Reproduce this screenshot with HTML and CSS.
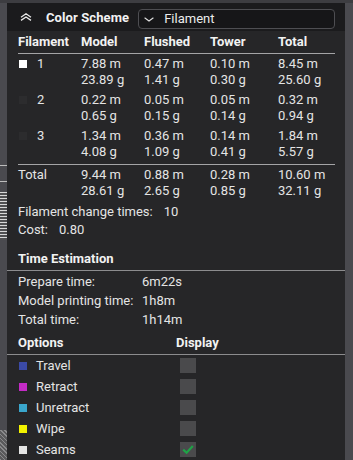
FILE: index.html
```html
<!DOCTYPE html>
<html lang="en">
<head>
  <meta charset="UTF-8" />
  <meta name="viewport" content="width=device-width, initial-scale=1" />
  <title>Color Scheme</title>
  <link rel="stylesheet" href="styles.css">
</head>
<body>

<div class="panel">
  <!-- Header -->
  <div class="panel-head">
    <svg class="collapse-icon" width="12" height="8" viewBox="0 0 12 8">
      <path d="M1 4.2 L6 0.8 L11 4.2 M1 7.4 L6 4 L11 7.4" fill="none" stroke="#e8e8e8" stroke-width="1.3"/>
    </svg>
    <span class="title">Color Scheme</span>
    <div class="select">
      <svg width="10" height="5" viewBox="0 0 10 5">
        <path d="M0.6 0.8 L5 4 L9.4 0.8" fill="none" stroke="#e0e0e0" stroke-width="1.1"/>
      </svg>
      <span>Filament</span>
    </div>
  </div>

  <div class="panel-body">
    <!-- Filament usage -->
    <div class="fil-row fil-head">
      <span>Filament</span>
      <span>Model</span>
      <span>Flushed</span>
      <span>Tower</span>
      <span>Total</span>
    </div>

    <div class="fil-rows">
      <div class="fil-row">
        <span class="fil-id"><i class="swatch" style="background:#ffffff"></i>1</span>
        <span><b>7.88 m</b><b>23.89 g</b></span>
        <span><b>0.47 m</b><b>1.41 g</b></span>
        <span><b>0.10 m</b><b>0.30 g</b></span>
        <span><b>8.45 m</b><b>25.60 g</b></span>
      </div>
      <div class="fil-row">
        <span class="fil-id"><i class="swatch" style="background:#2c2c2e"></i>2</span>
        <span><b>0.22 m</b><b>0.65 g</b></span>
        <span><b>0.05 m</b><b>0.15 g</b></span>
        <span><b>0.05 m</b><b>0.14 g</b></span>
        <span><b>0.32 m</b><b>0.94 g</b></span>
      </div>
      <div class="fil-row">
        <span class="fil-id"><i class="swatch" style="background:#2c2c2e"></i>3</span>
        <span><b>1.34 m</b><b>4.08 g</b></span>
        <span><b>0.36 m</b><b>1.09 g</b></span>
        <span><b>0.14 m</b><b>0.41 g</b></span>
        <span><b>1.84 m</b><b>5.57 g</b></span>
      </div>
    </div>

    <div class="fil-row fil-total">
      <span>Total</span>
      <span><b>9.44 m</b><b>28.61 g</b></span>
      <span><b>0.88 m</b><b>2.65 g</b></span>
      <span><b>0.28 m</b><b>0.85 g</b></span>
      <span><b>10.60 m</b><b>32.11 g</b></span>
    </div>

    <div class="summary">
      <div>Filament change times:<span class="val">10</span></div>
      <div>Cost:<span class="val">0.80</span></div>
    </div>

    <!-- Time estimation -->
    <div class="section-title">Time Estimation</div>
    <div class="time-list">
      <div class="time-row"><span>Prepare time:</span><span>6m22s</span></div>
      <div class="time-row"><span>Model printing time:</span><span>1h8m</span></div>
      <div class="time-row"><span>Total time:</span><span>1h14m</span></div>
    </div>

    <!-- Options -->
    <div class="section-title opt-head">
      <span>Options</span>
      <span>Display</span>
    </div>
    <div class="opt-list">
      <div class="opt-row">
        <span class="opt-name"><i class="swatch" style="background:#3b4aa6"></i>Travel</span>
        <span class="check"></span>
      </div>
      <div class="opt-row">
        <span class="opt-name"><i class="swatch" style="background:#c42bc6"></i>Retract</span>
        <span class="check"></span>
      </div>
      <div class="opt-row">
        <span class="opt-name"><i class="swatch" style="background:#3aa6cc"></i>Unretract</span>
        <span class="check"></span>
      </div>
      <div class="opt-row">
        <span class="opt-name"><i class="swatch" style="background:#f2f200"></i>Wipe</span>
        <span class="check"></span>
      </div>
      <div class="opt-row">
        <span class="opt-name"><i class="swatch" style="background:#e4e4e4"></i>Seams</span>
        <span class="check">
          <svg width="16" height="15" viewBox="0 0 16 15">
            <path d="M3.2 7.6 L6.6 10.8 L12.8 4" fill="none" stroke="#1fa347" stroke-width="2.2"/>
          </svg>
        </span>
      </div>
    </div>
  </div>
</div>

</body>
</html>
```

FILE: styles.css
```css
/* Page & 3D viewport behind the panel */
body {
  margin: 0;
  height: 460px;
  overflow: hidden;
  font-family: Roboto, "Noto Sans", sans-serif;
  font-size: 13px;
  color: #e4e4e4;
  background:
    repeating-linear-gradient(180deg, #d8d8d8 0 1px, #505052 1px 3px) 0 192px / 7px 48px no-repeat,
    linear-gradient(#bdbdbd, #bdbdbd) 0 165px / 7px 1px no-repeat,
    linear-gradient(#bdbdbd, #bdbdbd) 0 181px / 7px 1px no-repeat,
    repeating-linear-gradient(45deg, #8a8a8c 0 1px, #5a5a5c 1px 3px) 0 430px / 7px 30px no-repeat,
    linear-gradient(180deg, #3d3d41 0, #3d3d41 3px, #4a4a4f 3px);
}

/* Panel */
.panel {
  margin: 3px 8px 0 7px;
  height: 457px;
  background: #262628;
  overflow: hidden;
}

.panel-head {
  height: 28px;
  display: flex;
  align-items: center;
  background: #1b1b1d;
}

.collapse-icon {
  margin-left: 13px;
  margin-top: -1px;
}

.title {
  margin-left: 14px;
  font-weight: 700;
  color: #f2f2f2;
  letter-spacing: 0.1px;
}

.select {
  margin-left: 9px;
  margin-top: 3px;
  width: 195px;
  height: 18px;
  border: 1px solid #4e4e52;
  border-radius: 4px;
  background: #161618;
  display: flex;
  align-items: center;
}

.select svg {
  margin-left: 5px;
  margin-top: 1px;
}

.select span {
  margin-left: 10px;
  color: #ececec;
}

.panel-body {
  padding: 0 10px 0 11px;
}

/* Filament table */
.fil-row {
  display: grid;
  grid-template-columns: 63px 63px 66px 68px 1fr;
}

.fil-row b {
  display: block;
  font-weight: 400;
  line-height: 16px;
}

.fil-head {
  margin-top: 2px;
  line-height: 18px;
  padding-bottom: 2px;
  border-bottom: 1px solid #a4a4a6;
  font-weight: 700;
  color: #f2f2f2;
}

.fil-rows {
  margin-top: 2px;
  display: flex;
  flex-direction: column;
  gap: 4px;
}

.fil-id {
  display: flex;
  align-items: flex-start;
  line-height: 16px;
}

.swatch {
  display: inline-block;
  width: 8px;
  height: 8px;
  flex: none;
}

.fil-id .swatch {
  margin: 4px 10px 0 1px;
}

.fil-total {
  margin-top: 4px;
  padding-top: 2px;
  border-top: 1px solid #a4a4a6;
  line-height: 16px;
}

/* Summary */
.summary {
  margin-top: 4px;
  line-height: 18px;
}

.summary .val {
  margin-left: 11px;
}

/* Section headings span the whole panel width */
.section-title {
  margin: 10px -10px 0 -11px;
  padding: 0 10px 2px 11px;
  line-height: 19px;
  font-weight: 700;
  color: #f2f2f2;
  border-bottom: 1px solid #8c8c8e;
}

.time-list {
  margin-top: 1px;
}

.time-row {
  display: grid;
  grid-template-columns: 124px 1fr;
  line-height: 19px;
}

/* Options */
.opt-head {
  margin-top: 4px;
  display: grid;
  grid-template-columns: 158px 1fr;
}

.opt-row {
  display: grid;
  grid-template-columns: 162px 1fr;
  align-items: center;
  height: 21px;
}

.opt-name {
  display: flex;
  align-items: center;
}

.opt-name .swatch {
  margin: 0 9px 0 1px;
}

.check {
  width: 16px;
  height: 15px;
  background: #4a4a4c;
  display: flex;
}
```
